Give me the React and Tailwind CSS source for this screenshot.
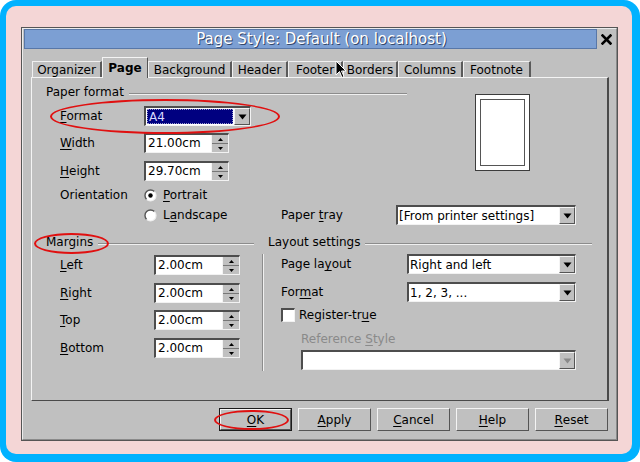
import React from 'react';

// small helpers for the old-style (KDE/Motif) widgets
const sunken = 'border-t-2 border-l-2 border-b border-r border-t-[#4d4d4d] border-l-[#4d4d4d] border-b-[#f2f2f2] border-r-[#f2f2f2]';
const raised = 'border-t border-l border-b border-r border-t-[#f4f4f4] border-l-[#f4f4f4] border-b-[#555] border-r-[#555]';

function U({ children }) {
  return <span className="underline underline-offset-[2px] decoration-[1px]">{children}</span>;
}

function GroupHeader({ title, className = '' }) {
  return (
    <div className={`flex items-center h-[16px] leading-[16px] ${className}`}>
      <span className="whitespace-nowrap">{title}</span>
      <div className="ml-[5px] mt-[3px] flex-1 h-[2px] border-t border-t-[#8c8c8c] border-b border-b-[#f0f0f0]" />
    </div>
  );
}

function Arrow({ disabled }) {
  return (
    <svg width="9" height="6" viewBox="0 0 9 6">
      <path d="M0.5 0.5 L8.5 0.5 L4.5 5.5 Z" fill={disabled ? '#8a8a8a' : '#000'} />
    </svg>
  );
}

function Combo({ value, className = '', selected, disabled }) {
  return (
    <div className={`flex h-[20px] bg-white ${sunken} ${className}`}>
      <div className="flex-1 flex items-center pl-[1px] pr-[1px] min-w-0">
        {selected ? (
          <div className="w-full h-[15px] bg-[#000080] text-[#d8d8ff] leading-[15px] pl-[1px] border border-dotted border-[#9a9ad0]">{value}</div>
        ) : (
          <span className="whitespace-nowrap leading-[16px]">{value}</span>
        )}
      </div>
      <div className={`w-[16px] h-[17px] flex items-center justify-center bg-[#c0c0c0] ${raised}`}>
        <Arrow disabled={disabled} />
      </div>
    </div>
  );
}

function Spin({ value, className = '' }) {
  return (
    <div className={`flex h-[20px] bg-white ${sunken} ${className}`}>
      <div className="flex-1 pl-[2px] leading-[17px] whitespace-nowrap">{value}</div>
      <div className="w-[17px] h-[17px] flex flex-col bg-[#c0c0c0] border-l border-l-[#f4f4f4]">
        <div className="flex-1 flex items-center justify-center border-b border-b-[#777]">
          <svg width="5" height="3" viewBox="0 0 5 3"><path d="M0 3 L2.5 0 L5 3 Z" fill="#000" /></svg>
        </div>
        <div className="flex-1 flex items-center justify-center">
          <svg width="5" height="3" viewBox="0 0 5 3"><path d="M0 0 L5 0 L2.5 3 Z" fill="#000" /></svg>
        </div>
      </div>
    </div>
  );
}

function Radio({ checked }) {
  return (
    <svg width="13" height="13" viewBox="0 0 13 13">
      <circle cx="6.5" cy="6.5" r="5.5" fill="#fff" />
      <path d="M2.6 10.4 A5.5 5.5 0 0 1 10.4 2.6" fill="none" stroke="#555" strokeWidth="1.4" />
      <path d="M10.4 2.6 A5.5 5.5 0 0 1 2.6 10.4" fill="none" stroke="#eee" strokeWidth="1.2" />
      {checked && <circle cx="6.5" cy="6.5" r="2.2" fill="#000" />}
    </svg>
  );
}

function Btn({ children, isDefault }) {
  return (
    <div className={`w-[73px] h-[23px] ${isDefault ? 'border border-[#1a1a1a]' : ''}`}>
      <div className={`w-full h-full flex items-center justify-center bg-[#c0c0c0] ${raised}`}>{children}</div>
    </div>
  );
}

const tabs = [
  { name: 'Organizer', w: 'w-[70px]' },
  { name: 'Page', w: 'w-[46px]', active: true },
  { name: 'Background', w: 'w-[84px]' },
  { name: 'Header', w: 'w-[56px]' },
  { name: 'Footer', w: 'w-[55px]' },
  { name: 'Borders', w: 'w-[55px]' },
  { name: 'Columns', w: 'w-[65px]' },
  { name: 'Footnote', w: 'w-[68px]' },
];

export default function App() {
  return (
    <div className="relative w-[640px] h-[462px] bg-white font-['DejaVu_Sans',sans-serif] text-[12px] text-black">
      <div className="w-full h-full rounded-[16px] bg-[#00b2ff] pl-[6px] pt-[6px] pr-[8px] pb-[8px]">
        <div className="w-full h-full rounded-[10px] bg-[#f4d6d6] pl-[15px] pt-[21px] pr-[14px] pb-[13px]">
          {/* dialog window */}
          <div className="h-full border border-[#555]">
            <div className="h-full flex flex-col bg-[#c0c0c0] border border-t-[#ececec] border-l-[#ececec] border-b-[#8a8a8a] border-r-[#8a8a8a]">
              {/* title bar */}
              <div className="flex mx-[1px] h-[20px]">
                <div className="flex-1 bg-[#7c9fd3] border border-[#5877a8] flex items-center justify-center pl-[22px] text-[15px] text-white [text-shadow:1px_1px_0_#34476a] whitespace-nowrap">
                  Page Style: Default (on localhost)
                </div>
                <div className="w-[18px] flex items-center justify-center">
                  <svg width="11" height="11" viewBox="0 0 11 11">
                    <path d="M1.5 1.5 L9.5 9.5 M9.5 1.5 L1.5 9.5" stroke="#000" strokeWidth="2.6" strokeLinecap="square" />
                  </svg>
                </div>
              </div>

              <div className="pl-[8px] pr-[7px] mt-[8px]">
                {/* tabs */}
                <div className="flex items-end h-[20px] pl-[1px] relative z-10">
                  {tabs.map((t) =>
                    t.active ? (
                      <div key={t.name} className={`${t.w} h-[21px] -mb-[1px] flex items-center justify-center font-bold bg-[#c0c0c0] border-t border-l border-t-[#f4f4f4] border-l-[#f4f4f4] border-r border-r-[#555] leading-[16px]`}>
                        {t.name}
                      </div>
                    ) : (
                      <div key={t.name} className={`${t.w} h-[16px] flex items-center justify-center bg-[#c0c0c0] border-t border-l border-t-[#f0f0f0] border-l-[#f0f0f0] border-r-2 border-r-[#5a5a5a] leading-[16px] whitespace-nowrap`}>
                        {t.name}
                      </div>
                    )
                  )}
                </div>

                {/* tab panel */}
                <div className="h-[324px] border border-t-[#f4f4f4] border-l-[#f4f4f4] border-b-[#4a4a4a] border-r-[#4a4a4a] border-r-2">
                  <div className="flex">
                    <div className="w-[443px]">
                      <GroupHeader title="Paper format" className="mt-[6px] pl-[14px] w-[375px]" />
                      <div className="mt-[6px] flex items-center h-[20px] pl-[28px]">
                        <span className="w-[84px]"><U>F</U>ormat</span>
                        <Combo value="A4" selected className="w-[107px]" />
                      </div>
                      <div className="mt-[7px] flex items-center h-[20px] pl-[28px]">
                        <span className="w-[84px]"><U>W</U>idth</span>
                        <Spin value="21.00cm" className="w-[85px]" />
                      </div>
                      <div className="mt-[8px] flex items-center h-[20px] pl-[28px]">
                        <span className="w-[84px]"><U>H</U>eight</span>
                        <Spin value="29.70cm" className="w-[85px]" />
                      </div>
                    </div>
                    <div className="mt-[16px] w-[55px] h-[77px] bg-white border border-[#3c3c3c] p-[4px]">
                      <div className="w-full h-full border border-[#555]" />
                    </div>
                  </div>

                  <div className="mt-[4px] flex items-center h-[20px] pl-[28px]">
                    <span className="w-[84px]">Orientation</span>
                    <Radio checked />
                    <span className="ml-[6px]"><U>P</U>ortrait</span>
                  </div>
                  <div className="flex items-center h-[20px] pl-[112px]">
                    <div className="w-[137px] flex items-center">
                      <Radio />
                      <span className="ml-[6px]">L<U>a</U>ndscape</span>
                    </div>
                    <span className="w-[115px]">Paper <U>t</U>ray</span>
                    <Combo value="[From printer settings]" className="w-[180px]" />
                  </div>

                  <div className="mt-[9px] flex">
                    {/* margins */}
                    <div className="w-[230px]">
                      <GroupHeader title="Margins" className="pl-[14px] pr-[8px]" />
                      {[
                        ['L', 'eft', 'mt-[5px]'],
                        ['R', 'ight', 'mt-[8px]'],
                        ['T', 'op', 'mt-[7px]'],
                        ['B', 'ottom', 'mt-[8px]'],
                      ].map(([a, b, m]) => (
                        <div key={a} className={`${m} flex items-center h-[20px] pl-[28px]`}>
                          <span className="w-[94px]"><U>{a}</U>{b}</span>
                          <Spin value="2.00cm" className="w-[86px]" />
                        </div>
                      ))}
                    </div>
                    {/* layout settings */}
                    <div className="flex-1">
                      <GroupHeader title="Layout settings" className="pl-[6px] pr-[15px]" />
                      <div className="mt-[4px] h-[117px] border-l border-l-[#8c8c8c] shadow-[inset_1px_0_0_#f0f0f0] pl-[18px]">
                        <div className="mt-[1px] flex items-center h-[20px]">
                          <span className="w-[126px]">Page la<U>y</U>out</span>
                          <Combo value="Right and left" className="w-[169px]" />
                        </div>
                        <div className="mt-[8px] flex items-center h-[20px]">
                          <span className="w-[126px]">For<U>m</U>at</span>
                          <Combo value="1, 2, 3, ..." className="w-[169px]" />
                        </div>
                        <div className="mt-[5px] flex items-center h-[16px]">
                          <div className={`w-[14px] h-[14px] bg-white ${sunken}`} />
                          <span className="ml-[4px]">Register-tr<U>u</U>e</span>
                        </div>
                        <div className="mt-[8px] h-[16px] leading-[16px] ml-[20px] text-[#8a8a8a]">
                          Reference <U>S</U>tyle
                        </div>
                        <Combo value="" disabled className="mt-[3px] ml-[20px] w-[275px]" />
                      </div>
                    </div>
                  </div>
                </div>

                {/* buttons */}
                <div className="mt-[7px] flex justify-end gap-[6px] pr-[1px]">
                  <Btn isDefault><U>O</U>K</Btn>
                  <Btn><U>A</U>pply</Btn>
                  <Btn><U>C</U>ancel</Btn>
                  <Btn><U>H</U>elp</Btn>
                  <Btn><U>R</U>eset</Btn>
                </div>
              </div>
            </div>
          </div>
        </div>
      </div>

      {/* red annotation ellipses */}
      <div className="absolute z-20 left-[50px] top-[99px] w-[230px] h-[35px] rounded-[50%] border-2 border-[#e01010]" />
      <div className="absolute z-20 left-[34px] top-[233px] w-[75px] h-[21px] rounded-[50%] border-2 border-[#e01010]" />
      <div className="absolute z-20 left-[214px] top-[410px] w-[75px] h-[20px] rounded-[50%] border-2 border-[#e01010]" />

      {/* mouse pointer */}
      <svg className="absolute z-30 left-[335px] top-[60px]" width="12" height="19" viewBox="0 0 12 19">
        <path d="M1 1 L1 15 L4.5 11.5 L7 17.5 L9 16.5 L6.5 11 L11 11 Z" fill="#000" stroke="#fff" strokeWidth="1" />
      </svg>
    </div>
  );
}
